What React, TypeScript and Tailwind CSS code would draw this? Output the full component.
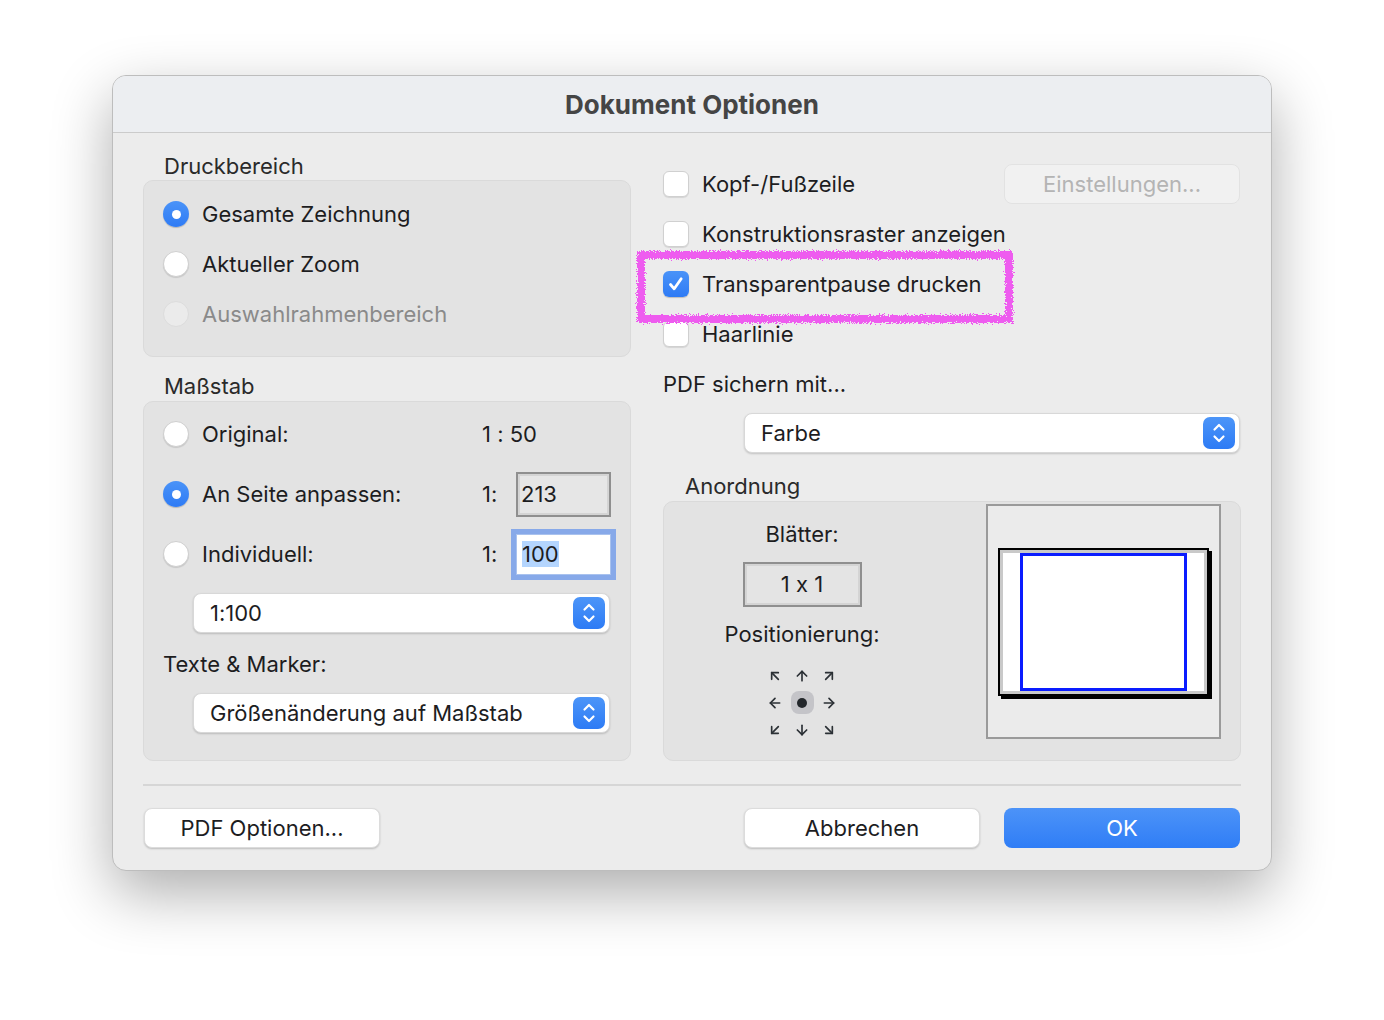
import {
  ArrowDown,
  ArrowDownLeft,
  ArrowDownRight,
  ArrowLeft,
  ArrowRight,
  ArrowUp,
  ArrowUpLeft,
  ArrowUpRight,
} from "lucide-react";

function Radio({ checked, disabled }: { checked?: boolean; disabled?: boolean }) {
  if (checked) {
    return (
      <span className="grid h-[26px] w-[26px] shrink-0 place-items-center rounded-full bg-gradient-to-b from-[#4a93f8] to-[#2e7bf5] shadow-[0_1px_1px_rgba(0,0,0,0.2)]">
        <span className="h-[9px] w-[9px] rounded-full bg-white" />
      </span>
    );
  }
  return (
    <span
      className={`h-[26px] w-[26px] shrink-0 rounded-full border ${
        disabled ? "border-[#dcdcdc] bg-[#ebebeb]" : "border-[#cfcfcf] bg-white shadow-[0_1px_1px_rgba(0,0,0,0.12)]"
      }`}
    />
  );
}

function Checkbox({ checked }: { checked?: boolean }) {
  if (checked) {
    return (
      <span className="grid h-[26px] w-[26px] shrink-0 place-items-center rounded-[6px] bg-gradient-to-b from-[#4a93f8] to-[#2e7bf5] shadow-[0_1px_1px_rgba(0,0,0,0.2)]">
        <svg width="20" height="20" viewBox="0 0 20 20" fill="none">
          <path d="M4.5 10.5 L8.2 14.8 L15.2 4.8" stroke="white" strokeWidth="2.8" strokeLinecap="round" strokeLinejoin="round" />
        </svg>
      </span>
    );
  }
  return <span className="h-[26px] w-[26px] shrink-0 rounded-[6px] border border-[#d0d0d0] bg-white shadow-[0_1px_1px_rgba(0,0,0,0.1)]" />;
}

function Stepper() {
  return (
    <span className="grid h-[32px] w-[32px] place-items-center rounded-[7px] bg-gradient-to-b from-[#4c95f8] to-[#2d7bf5]">
      <svg width="32" height="32" viewBox="0 0 32 32" fill="none">
        <path d="M11.5 12.5 L16 8 L20.5 12.5" stroke="white" strokeWidth="2.2" strokeLinecap="round" strokeLinejoin="round" />
        <path d="M11.5 19.5 L16 24 L20.5 19.5" stroke="white" strokeWidth="2.2" strokeLinecap="round" strokeLinejoin="round" />
      </svg>
    </span>
  );
}

function Select({ value, className = "" }: { value: string; className?: string }) {
  return (
    <div
      className={`flex h-[40px] items-center justify-between rounded-[8px] border border-[#d8d8d8] bg-white pl-[16px] pr-[4px] shadow-[0_1px_2px_rgba(0,0,0,0.18)] ${className}`}
    >
      <span>{value}</span>
      <Stepper />
    </div>
  );
}

function Button({ label, primary, disabled }: { label: string; primary?: boolean; disabled?: boolean }) {
  const look = primary
    ? "bg-gradient-to-b from-[#4c93f8] to-[#2f7df6] text-white"
    : disabled
      ? "bg-[#f1f1f1] text-[#b4b4b4] border border-[#e2e2e2]"
      : "bg-white text-[#1d1d1f] border border-[#dcdcdc] shadow-[0_1px_2px_rgba(0,0,0,0.2)]";
  return (
    <div className={`flex h-[40px] w-[236px] items-center justify-center rounded-[8px] ${look}`}>{label}</div>
  );
}

const arrows = [ArrowUpLeft, ArrowUp, ArrowUpRight, ArrowLeft, null, ArrowRight, ArrowDownLeft, ArrowDown, ArrowDownRight];

export default function App() {
  return (
    <div className="h-[1020px] w-[1384px] bg-white pl-[112px] pt-[75px] font-[Inter,sans-serif] text-[22px] text-[#1d1d1f] [font-feature-settings:'calt'_0]">
      <div className="w-[1160px] overflow-hidden rounded-[14px] border border-[#bdbdbd] bg-[#ececec] shadow-[0_22px_60px_rgba(0,0,0,0.32)]">
        {/* title bar */}
        <div className="flex h-[57px] items-center justify-center border-b border-[#cbcbcb] bg-[#eceef1] text-[26px] font-bold text-[#454545]">
          Dokument Optionen
        </div>

        <div className="flex flex-col px-[30px] pb-[22px] pt-[19px]">
          <div className="flex gap-[32px]">
            {/* left column */}
            <div className="flex w-[488px] flex-col">
              <div className="flex h-[28px] items-center pl-[21px] text-[#2a2a2a]">Druckbereich</div>
              <div className="flex flex-col rounded-[10px] border border-[#dadada] bg-[#e3e3e3] pb-[17px] pl-[19px] pt-[8px]">
                <div className="flex h-[50px] items-center gap-[13px]">
                  <Radio checked />
                  <span>Gesamte Zeichnung</span>
                </div>
                <div className="flex h-[50px] items-center gap-[13px]">
                  <Radio />
                  <span>Aktueller Zoom</span>
                </div>
                <div className="flex h-[50px] items-center gap-[13px]">
                  <Radio disabled />
                  <span className="text-[#8a8a8a]">Auswahlrahmenbereich</span>
                </div>
              </div>

              <div className="mt-[15px] flex h-[29px] items-center pl-[21px] text-[#2a2a2a]">Maßstab</div>
              <div className="flex flex-col rounded-[10px] border border-[#dadada] bg-[#e3e3e3] pb-[27px] pl-[19px] pt-[2px]">
                <div className="flex h-[60px] items-center">
                  <Radio />
                  <span className="ml-[13px] w-[280px]">Original:</span>
                  <span>1 : 50</span>
                </div>
                <div className="flex h-[60px] items-center">
                  <Radio checked />
                  <span className="ml-[13px] w-[280px]">An Seite anpassen:</span>
                  <span className="w-[34px]">1:</span>
                  <div className="flex h-[45px] w-[95px] items-center border-2 border-[#8f8f8f] bg-[#e6e6e6] pl-[3px] shadow-[inset_0_0_0_2px_#d4d4d4]">
                    213
                  </div>
                </div>
                <div className="flex h-[60px] items-center">
                  <Radio />
                  <span className="ml-[13px] w-[280px]">Individuell:</span>
                  <span className="w-[34px]">1:</span>
                  <div className="flex h-[41px] w-[95px] items-center border border-[#a9c2ee] bg-white pl-[5px] shadow-[0_0_0_5px_#87a9e9]">
                    <span className="bg-[#b4d5fe] leading-[26px]">100</span>
                  </div>
                </div>
                <Select value="1:100" className="ml-[30px] mt-[9px] w-[417px]" />
                <div className="mt-[16px] flex h-[30px] items-center">Texte &amp; Marker:</div>
                <Select value="Größenänderung auf Maßstab" className="ml-[30px] mt-[14px] w-[417px]" />
              </div>
            </div>

            {/* right column */}
            <div className="relative flex w-[578px] flex-col pt-[7px]">
              <div className="flex h-[50px] items-center gap-[13px]">
                <Checkbox />
                <span className="flex-1">Kopf-/Fußzeile</span>
                <span className="mr-[1px]">
                  <Button label="Einstellungen..." disabled />
                </span>
              </div>
              <div className="flex h-[50px] items-center gap-[13px]">
                <Checkbox />
                <span>Konstruktionsraster anzeigen</span>
              </div>
              <div className="flex h-[50px] items-center gap-[13px]">
                <Checkbox checked />
                <span>Transparentpause drucken</span>
              </div>
              <div className="flex h-[50px] items-center gap-[13px]">
                <Checkbox />
                <span>Haarlinie</span>
              </div>

              {/* crayon marker around the checked option */}
              <svg className="pointer-events-none absolute left-[-28px] top-[97px]" width="382" height="76" viewBox="0 0 382 76">
                <defs>
                  <filter id="crayon" x="-5%" y="-20%" width="110%" height="140%">
                    <feTurbulence type="fractalNoise" baseFrequency="0.9" numOctaves="2" seed="3" result="noise" />
                    <feDisplacementMap in="SourceGraphic" in2="noise" scale="7" />
                  </filter>
                </defs>
                <rect x="6" y="6" width="368" height="64" fill="none" stroke="#ee5bef" strokeWidth="8" filter="url(#crayon)" />
              </svg>

              <div className="mt-[11px] flex h-[28px] items-center">PDF sichern mit...</div>
              <Select value="Farbe" className="ml-[81px] mr-[1px] mt-[15px]" />

              <div className="mt-[19px] flex h-[29px] items-center pl-[22px] text-[#2a2a2a]">Anordnung</div>
              <div className="flex h-[260px] justify-between rounded-[10px] border border-[#dadada] bg-[#e3e3e3] pr-[19px] pt-[2px]">
                <div className="flex w-[276px] flex-col items-center">
                  <div className="mt-[16px] flex h-[28px] items-center">Blätter:</div>
                  <div className="mt-[14px] flex h-[45px] w-[119px] items-center justify-center border-2 border-[#8f8f8f] bg-[#e4e4e4] shadow-[inset_0_0_0_2px_#d4d4d4]">
                    1 x 1
                  </div>
                  <div className="mt-[13px] flex h-[28px] items-center">Positionierung:</div>
                  <div className="mt-[14px] grid grid-cols-[27px_27px_27px] grid-rows-[27px_27px_27px] text-[#2b3035]">
                    {arrows.map((Icon, i) =>
                      Icon ? (
                        <span key={i} className="grid place-items-center">
                          <Icon size={16} strokeWidth={2.5} />
                        </span>
                      ) : (
                        <span key={i} className="grid place-items-center">
                          <span className="grid h-[23px] w-[23px] place-items-center rounded-[8px] bg-[#c4c4c8]">
                            <span className="h-[10px] w-[10px] rounded-full bg-[#23272b]" />
                          </span>
                        </span>
                      ),
                    )}
                  </div>
                </div>

                {/* page preview */}
                <div className="flex h-[235px] w-[235px] items-center justify-center border-2 border-[#9a9a9a] bg-[#ebebeb]">
                  <div className="h-[148px] w-[211px] border-2 border-black shadow-[3px_3px_0_#000]">
                    <div className="flex h-full w-full border-[3px] border-[#c9c9c9] bg-white px-[17px]">
                      <div className="h-full w-full border-[3px] border-[#0a1cff] bg-white" />
                    </div>
                  </div>
                </div>
              </div>
            </div>
          </div>

          <div className="mt-[23px] h-[2px] bg-[#d6d6d6]" />

          <div className="mt-[22px] flex items-center px-[1px]">
            <Button label="PDF Optionen..." />
            <div className="flex-1" />
            <Button label="Abbrechen" />
            <div className="w-[24px]" />
            <Button label="OK" primary />
          </div>
        </div>
      </div>
    </div>
  );
}
